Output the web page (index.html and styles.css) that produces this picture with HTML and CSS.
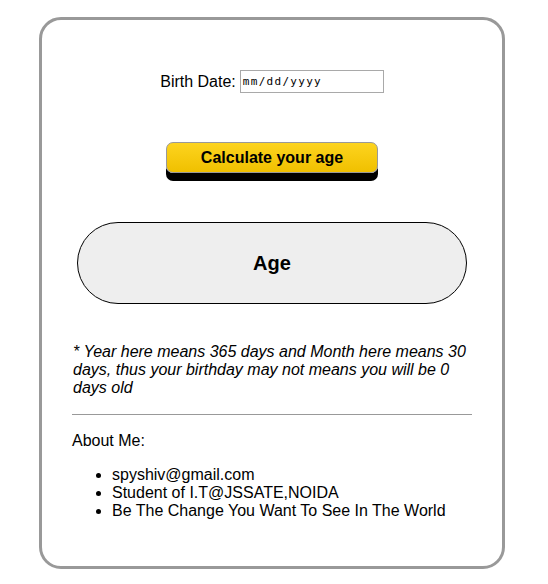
FILE: index.html
```html
<!DOCTYPE html>
<html>
<head>
<meta charset="utf-8">
<link rel="stylesheet" href="styles.css">
</head>
<body>
<div class="card">
  <div class="form-row">
    <label class="label" for="bd">Birth Date:</label>
    <span class="date-input" id="bd">mm/dd/yyyy</span>
  </div>
  <div class="btn-row">
    <button class="calc-btn">Calculate your age</button>
  </div>
  <div class="age-box">Age</div>
  <p class="note">* Year here means 365 days and Month here means 30 days, thus your birthday may not means you will be 0 days old</p>
  <hr class="divider">
  <p class="about">About Me:</p>
  <ul class="about-list">
    <li>spyshiv@gmail.com</li>
    <li>Student of I.T@JSSATE,NOIDA</li>
    <li>Be The Change You Want To See In The World</li>
  </ul>
</div>
</body>
</html>
```
FILE: styles.css
```css
html, body {
  background: #fff;
}
body {
  margin: 8px;
  font-family: "Liberation Sans", Arial, sans-serif;
  font-size: 16px;
  color: #000;
}
.card {
  box-sizing: border-box;
  width: 466px;
  height: 552px;
  margin: 9px 0 0 31px;
  border: 3px solid #999;
  border-radius: 22px;
  padding: 0 30px;
}
.form-row {
  display: flex;
  justify-content: center;
  align-items: center;
  margin-top: 50px;
  gap: 4px;
}
.label {
  font-size: 16px;
  line-height: 18px;
}
.date-input {
  box-sizing: border-box;
  width: 144px;
  height: 23px;
  border: 1px solid #a9a9a9;
  padding: 0 2px;
  font-family: "DejaVu Sans Mono", monospace;
  font-size: 11px;
  line-height: 21px;
  letter-spacing: 1.3px;
}
.btn-row {
  display: flex;
  justify-content: center;
  margin-top: 49px;
}
.calc-btn {
  box-sizing: border-box;
  width: 212px;
  height: 31px;
  border: 1px solid #999;
  border-radius: 7px;
  background: linear-gradient(#fdd41f, #f0c000);
  box-shadow: 0 8px 0 #000;
  font-family: "Liberation Sans", Arial, sans-serif;
  font-weight: bold;
  font-size: 16px;
  color: #000;
  padding: 0;
}
.age-box {
  box-sizing: border-box;
  width: 390px;
  height: 82px;
  margin: 49px auto 0;
  border: 1px solid #000;
  border-radius: 41px;
  background: #eee;
  display: flex;
  align-items: center;
  justify-content: center;
  font-weight: bold;
  font-size: 20px;
}
.note {
  font-style: italic;
  font-size: 16px;
  line-height: 18px;
  margin: 39px 0 0 0;
  padding-left: 1px;
}
.divider {
  border: 0;
  border-top: 1px solid #999;
  height: 0;
  margin: 17px 0 0 0;
}
.about {
  margin: 17px 0 0 0;
  line-height: 18px;
}
.about-list {
  margin: 16px 0 0 0;
  padding-left: 40px;
  line-height: 18px;
}
```
